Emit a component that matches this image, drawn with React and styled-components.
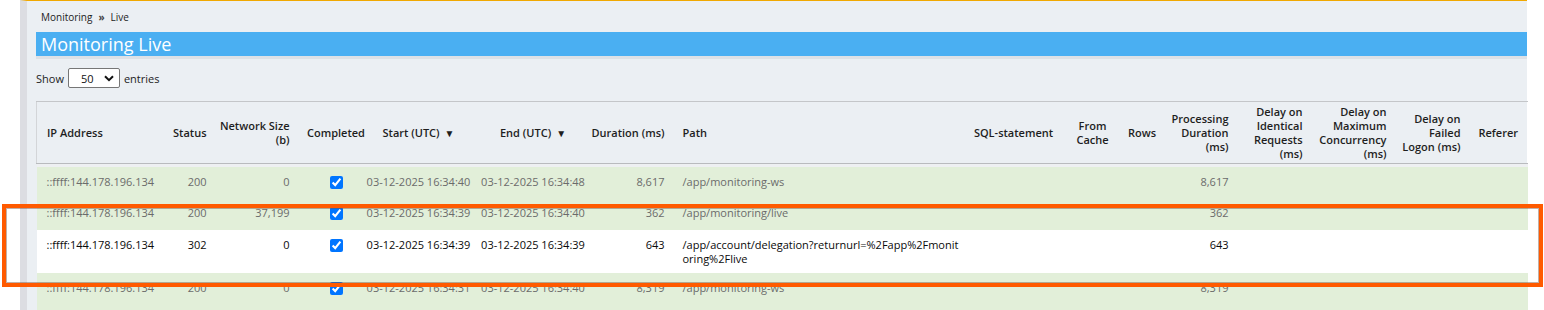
import styled, { createGlobalStyle } from 'styled-components';

const GlobalStyle = createGlobalStyle`
  html, body {
    margin: 0;
    padding: 0;
    background: #fff;
    font-family: "Open Sans", "Liberation Sans", sans-serif;
  }
`;

const Page = styled.div`
  position: relative;
  height: 310px;
  overflow: hidden;
  padding-left: 20px;
`;

const Main = styled.div`
  width: 1507px;
  height: 310px;
  box-sizing: border-box;
  background: #ebeff3;
  border-left: 7px solid #dcdde2;
  border-top: 1px solid #f0a800;
  padding-left: 9px;
`;

const Breadcrumb = styled.div`
  height: 31px;
  display: flex;
  align-items: center;
  gap: 6px;
  padding-left: 5px;
  font-size: 10px;
  color: #1d1d1d;
`;

const Crumb = styled.span`
  font-size: ${p => (p.sep ? '10px' : 'inherit')};
  font-weight: ${p => (p.sep ? 700 : 400)};
  color: ${p => (p.sep ? '#444' : 'inherit')};
`;

const TitleBar = styled.h1`
  margin: 0;
  height: 24px;
  line-height: 24px;
  background: #4aaff2;
  box-shadow: 0 3px 0 #dde1e6;
  color: #fff;
  font-size: 18px;
  font-weight: 400;
  padding-left: 5px;
`;

const LengthRow = styled.div`
  display: flex;
  align-items: center;
  gap: 4px;
  margin-top: 12px;
  height: 20px;
  font-size: 11px;
  color: #222;
`;

const SelectBox = styled.div`
  box-sizing: border-box;
  width: 52px;
  height: 20px;
  border: 1px solid #767676;
  border-radius: 2px;
  background: #fff;
  display: flex;
  align-items: center;
  justify-content: space-between;
  padding: 0 5px 0 12px;
  font-size: 11px;
  color: #111;
`;

const Table = styled.table`
  margin-top: 13px;
  border-collapse: collapse;
  table-layout: fixed;
  width: 1491px;
  font-size: 11px;
`;

const HeadCell = styled.th`
  box-sizing: border-box;
  border-top: 1px solid #c4c6c9;
  border-bottom: 1px solid #b9bbbe;
  height: 62px;
  padding: 0 ${p => p.pr ?? 10}px 0 ${p => p.pl ?? 10}px;
  text-align: ${p => p.align || 'left'};
  vertical-align: middle;
  white-space: nowrap;
  font-weight: 600;
  line-height: 14px;
  color: #1e1e1e;
  &:first-child {
    border-left: 1px solid #d3d5d8;
  }
`;

const SortArrow = styled.span`
  font-size: 10px;
  margin-left: 5px;
`;

const Spacer = styled.tr`
  height: 3px;
  background: #eef0f2;
`;

const Row = styled.tr`
  background: ${p => (p.highlight ? '#fff' : '#e2efd9')};
  color: ${p => (p.highlight ? '#0a0a0a' : '#6b6b6b')};
  height: ${p => p.h}px;
`;

const Cell = styled.td`
  box-sizing: border-box;
  padding: 8px ${p => p.pr ?? 10}px 7px ${p => p.pl ?? 10}px;
  text-align: ${p => p.align || 'left'};
  vertical-align: top;
  line-height: 14px;
  white-space: ${p => (p.wrap ? 'normal' : 'nowrap')};
  word-break: ${p => (p.wrap ? 'break-all' : 'normal')};
`;

const Check = styled.input`
  display: block;
  margin: 1px auto 0;
  width: 13px;
  height: 13px;
  accent-color: #0075ff;
`;

const Annotation = styled.div`
  position: absolute;
  left: 2px;
  top: 204px;
  width: 1541px;
  height: 83px;
  box-sizing: border-box;
  border: 4px solid #ff5a00;
  box-shadow: inset 0 0 0 1px rgba(120, 80, 60, 0.45);
  pointer-events: none;
`;

const columns = [
  { key: 'ip', label: ['IP Address'], width: 124, align: 'left', pl: 10 },
  { key: 'status', label: ['Status'], width: 52, align: 'right', pr: 6, pl: 0 },
  { key: 'size', label: ['Network Size', '(b)'], width: 88, align: 'right', pr: 11, pl: 0 },
  { key: 'done', label: ['Completed'], width: 66, align: 'center', pl: 5, pr: 0 },
  { key: 'start', label: ['Start (UTC)'], sort: true, width: 108, align: 'center', pl: 0, pr: 4 },
  { key: 'end', label: ['End (UTC)'], sort: true, width: 117, align: 'center', pl: 0, pr: 0 },
  { key: 'dur', label: ['Duration (ms)'], width: 83, align: 'right', pr: 10, pl: 0 },
  { key: 'path', label: ['Path'], width: 295, align: 'left', pl: 8, pr: 8 },
  { key: 'sql', label: ['SQL-statement'], width: 92, align: 'center', pl: 0, pr: 4 },
  { key: 'cache', label: ['From', 'Cache'], width: 62, align: 'center', pl: 0, pr: 0 },
  { key: 'rows', label: ['Rows'], width: 37, align: 'center', pl: 0, pr: 0 },
  { key: 'proc', label: ['Processing', 'Duration', '(ms)'], width: 78, align: 'right', pr: 10, pl: 0 },
  { key: 'ident', label: ['Delay on', 'Identical', 'Requests', '(ms)'], width: 74, align: 'right', pr: 10, pl: 0 },
  { key: 'conc', label: ['Delay on', 'Maximum', 'Concurrency', '(ms)'], width: 84, align: 'right', pr: 10, pl: 0 },
  { key: 'logon', label: ['Delay on', 'Failed', 'Logon (ms)'], width: 74, align: 'right', pr: 10, pl: 0 },
  { key: 'ref', label: ['Referer'], width: 57, align: 'left', pl: 8, pr: 0 },
];

const rows = [
  {
    h: 31, ip: '::ffff:144.178.196.134', status: '200', size: '0',
    start: '03-12-2025 16:34:40', end: '03-12-2025 16:34:48', dur: '8,617',
    path: '/app/monitoring-ws', proc: '8,617',
  },
  {
    h: 32, ip: '::ffff:144.178.196.134', status: '200', size: '37,199',
    start: '03-12-2025 16:34:39', end: '03-12-2025 16:34:40', dur: '362',
    path: '/app/monitoring/live', proc: '362',
  },
  {
    h: 43, highlight: true, ip: '::ffff:144.178.196.134', status: '302', size: '0',
    start: '03-12-2025 16:34:39', end: '03-12-2025 16:34:39', dur: '643',
    path: '/app/account/delegation?returnurl=%2Fapp%2Fmonitoring%2Flive', proc: '643',
  },
  {
    h: 40, ip: '::ffff:144.178.196.134', status: '200', size: '0',
    start: '03-12-2025 16:34:31', end: '03-12-2025 16:34:40', dur: '8,319',
    path: '/app/monitoring-ws', proc: '8,319',
  },
];

const Chevron = () => (
  <svg width="10" height="7" viewBox="0 0 10 7">
    <path d="M1 1.2 L5 5.2 L9 1.2" fill="none" stroke="#111" strokeWidth="2" />
  </svg>
);

const MonitoringLive = () => (
  <Page>
    <GlobalStyle />
    <Main>
      <Breadcrumb>
        <Crumb>Monitoring</Crumb>
        <Crumb sep>»</Crumb>
        <Crumb>Live</Crumb>
      </Breadcrumb>
      <TitleBar>Monitoring Live</TitleBar>
      <LengthRow>
        Show
        <SelectBox>
          50
          <Chevron />
        </SelectBox>
        entries
      </LengthRow>
      <Table>
        <colgroup>
          {columns.map(c => <col key={c.key} style={{ width: c.width }} />)}
        </colgroup>
        <thead>
          <tr>
            {columns.map(c => (
              <HeadCell key={c.key} align={c.align} pl={c.pl} pr={c.pr}>
                {c.label.map((line, i) => (
                  <span key={i}>
                    {i > 0 && <br />}
                    {line}
                  </span>
                ))}
                {c.sort && <SortArrow>▼</SortArrow>}
              </HeadCell>
            ))}
          </tr>
        </thead>
        <tbody>
          <Spacer><td colSpan={columns.length} /></Spacer>
          {rows.map((r, i) => (
            <Row key={i} h={r.h} highlight={r.highlight}>
              {columns.map(c => (
                <Cell key={c.key} align={c.align} pl={c.pl} pr={c.pr} wrap={c.key === 'path'}>
                  {c.key === 'done' ? <Check type="checkbox" checked readOnly /> : r[c.key] || ''}
                </Cell>
              ))}
            </Row>
          ))}
        </tbody>
      </Table>
    </Main>
    <Annotation />
  </Page>
);

export default function App() {
  return <MonitoringLive />;
}
